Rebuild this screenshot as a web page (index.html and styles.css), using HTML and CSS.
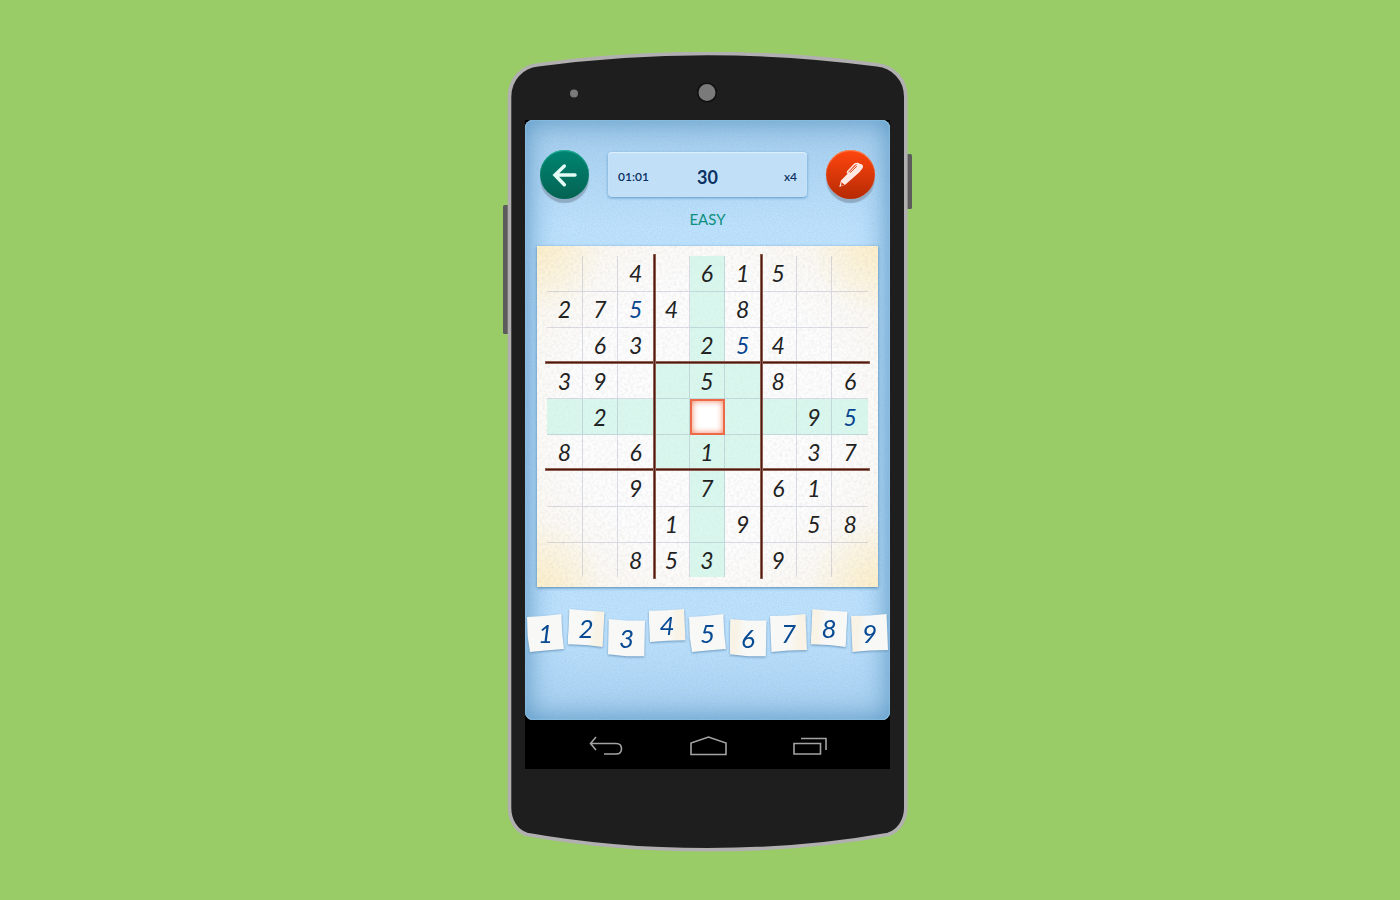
FILE: index.html
```html
<!DOCTYPE html>
<html lang="en">
<head>
<meta charset="utf-8">
<meta name="viewport" content="width=device-width, initial-scale=1">
<title>Sudoku</title>
<link rel="stylesheet" href="styles.css">
</head>
<body>
<main class="stage">
<div class="phone">
  <svg class="phone-body" viewBox="0 0 410 800" preserveAspectRatio="none" aria-hidden="true">
    <rect x="0" y="153" width="6" height="129" rx="1.5" fill="#5c5c5c"/>
    <rect x="403" y="102" width="6" height="55" rx="1.5" fill="#5c5c5c"/>
    <path d="M6.5 45C6.500 27 19 14.500 35 12.800Q204.500 -9.800 374 12.800C390 14.500 402.800 27 402.800 45V756C402.800 768 396 779 385 782.500Q300 797.800 204.500 797.800Q110 797.800 24 782.500C13 779 6.500 768 6.500 756Z" fill="#1e1e1e" stroke="#b1afaf" stroke-width="3.600"/>
    <circle cx="71" cy="41.500" r="4" fill="#7a7a7a"/>
    <circle cx="204" cy="40.500" r="9.300" fill="#7a7a7a" stroke="#101010" stroke-width="1.600"/>
  </svg>
  <div class="screen">
    <section class="app">
      <svg class="grain" aria-hidden="true">
        <filter id="grain-blue"><feTurbulence type="fractalNoise" baseFrequency="0.8" numOctaves="2" seed="4"/><feColorMatrix values="0 0 0 0 0.12  0 0 0 0 0.35  0 0 0 0 0.6  0.35 0 0 0 -0.13"/></filter>
        <rect width="100%" height="100%" filter="url(#grain-blue)"/>
      </svg>
      <header class="bar">
        <button class="round back" type="button" aria-label="Back">
          <svg viewBox="0 0 72 72" aria-hidden="true"><path d="M66 36H8M34 9L6 36L34 65" fill="none" stroke="#e3fbf5" stroke-width="10.500" stroke-linecap="round" stroke-linejoin="miter"/></svg>
        </button>
        <div class="status">
          <span class="time">01:01</span><strong class="left">30</strong><span class="count">x4</span>
        </div>
        <button class="round pen" type="button" aria-label="Pen">
          <svg viewBox="0 0 74 74" aria-hidden="true">
            <path d="M1 74L6 54L43 16L56 4Q59 0 64 2L71 5Q77 10 72 17L62 29L20 66Z" fill="#ffe9e2"/>
            <path d="M8 59L17 67L6 70Z" fill="#d63407"/>
            <path d="M29 31Q24 32 27 26L47 5Q51 1 60 2" fill="none" stroke="#ffe9e2" stroke-width="4.500" stroke-linecap="round"/>
            <path d="M34 30L55 10" fill="none" stroke="#e23c0b" stroke-width="3"/>
          </svg>
        </button>
      </header>
      <h1 class="level">EASY</h1>
      <div class="paper">
        <svg class="grain" aria-hidden="true">
          <filter id="grain-paper"><feTurbulence type="fractalNoise" baseFrequency="0.35" numOctaves="2" seed="9"/><feColorMatrix values="0 0 0 0 0.4  0 0 0 0 0.4  0 0 0 0 0.4  0.3 0 0 0 -0.11"/></filter>
          <rect width="100%" height="100%" filter="url(#grain-paper)"/>
        </svg>
        <div class="board">
          <table class="grid" aria-label="Sudoku board">
            <tbody>
            <tr><td></td><td></td><td>4</td><td></td><td class="hl">6</td><td>1</td><td>5</td><td></td><td></td></tr>
            <tr><td>2</td><td>7</td><td class="own">5</td><td>4</td><td class="hl"></td><td>8</td><td></td><td></td><td></td></tr>
            <tr><td></td><td>6</td><td>3</td><td></td><td class="hl">2</td><td class="own">5</td><td>4</td><td></td><td></td></tr>
            <tr><td>3</td><td>9</td><td></td><td class="hl"></td><td class="hl">5</td><td class="hl"></td><td>8</td><td></td><td>6</td></tr>
            <tr><td class="hl"></td><td class="hl">2</td><td class="hl"></td><td class="hl"></td><td class="selected"></td><td class="hl"></td><td class="hl"></td><td class="hl">9</td><td class="hl own">5</td></tr>
            <tr><td>8</td><td></td><td>6</td><td class="hl"></td><td class="hl">1</td><td class="hl"></td><td></td><td>3</td><td>7</td></tr>
            <tr><td></td><td></td><td>9</td><td></td><td class="hl">7</td><td></td><td>6</td><td>1</td><td></td></tr>
            <tr><td></td><td></td><td></td><td>1</td><td class="hl"></td><td>9</td><td></td><td>5</td><td>8</td></tr>
            <tr><td></td><td></td><td>8</td><td>5</td><td class="hl">3</td><td></td><td>9</td><td></td><td></td></tr>
            </tbody>
          </table>
          <i class="rule across first"></i><i class="rule across second"></i>
          <i class="rule down first"></i><i class="rule down second"></i>
        </div>
      </div>
      <div class="tiles">
        <button class="tile mid lean-left" type="button"><span>1</span></button>
        <button class="tile lean-right warm" type="button"><span>2</span></button>
        <button class="tile low flat" type="button"><span>3</span></button>
        <button class="tile short level-left warm" type="button"><span>4</span></button>
        <button class="tile mid lean-left" type="button"><span>5</span></button>
        <button class="tile low flat warm-left" type="button"><span>6</span></button>
        <button class="tile mid level-left warm" type="button"><span>7</span></button>
        <button class="tile lean-right warm-left" type="button"><span>8</span></button>
        <button class="tile mid level-left warm-left" type="button"><span>9</span></button>
      </div>
    </section>
    <nav class="keys" aria-label="System">
      <button type="button" aria-label="Back"><svg width="34" height="20" viewBox="0 0 34 20" aria-hidden="true"><path d="M7 1L1.500 7.500L7 14M2 7.500H27Q32.500 7.500 32.500 12.700Q32.500 18 27 18H15"/></svg></button>
      <button type="button" aria-label="Home"><svg width="37" height="20" viewBox="0 0 37 20" aria-hidden="true"><path d="M1 18.500V7L18.500 1L36 7V18.500Z"/></svg></button>
      <button type="button" aria-label="Recent apps"><svg width="34" height="20" viewBox="0 0 34 20" aria-hidden="true"><path d="M1 7.500H27.500V18H1ZM8 2.500H33V14"/></svg></button>
    </nav>
  </div>
</div>
</main>
</body>
</html>
```
FILE: styles.css
```css
* { box-sizing: border-box; }

body {
  margin: 0;
  background: #99cc66;
  font-family: Lato, "Open Sans", sans-serif;
}

button {
  border: 0;
  padding: 0;
  background: none;
  font: inherit;
  cursor: pointer;
}

.stage {
  min-height: 100vh;
  display: flex;
  justify-content: center;
  align-items: flex-start;
  padding: 52px 0 48px 16px;
}

.phone {
  position: relative;
  padding: 68px 23px 83px 22px;
}

.phone-body {
  position: absolute;
  inset: 0;
  width: 100%;
  height: 100%;
}

.screen {
  position: relative;
  width: 365px;
  background: #000;
}

.app {
  position: relative;
  padding: 30px 0 63px;
  border-radius: 8px;
  overflow: hidden;
  background: linear-gradient(#a6cdec, #bfe2fd 18%, #bfe2fd 85%, #a9d0f0);
  box-shadow: inset 0 0 2px #a5dbf5, inset 0 0 26px #5b97c4, inset 0 0 40px #9cc6e6;
}

.grain {
  position: absolute;
  inset: 0;
  width: 100%;
  height: 100%;
  pointer-events: none;
}

.bar {
  position: relative;
  display: flex;
  justify-content: space-between;
  align-items: center;
  padding: 0 15px;
}

.round {
  display: grid;
  place-items: center;
  width: 49px;
  height: 49px;
  border-radius: 50%;
}

.round svg { width: 24px; height: 24px; overflow: visible; }

.back {
  background: linear-gradient(#008572, #046353);
  box-shadow: inset 0 1px 1px #2bb59c, 0 4px 1px #8fabc4;
}

.pen {
  background: linear-gradient(#ff460e, #b62a04);
  box-shadow: inset 0 1px 1px #ff8a5c, 0 4px 1px #8fabc4;
}

.status {
  display: grid;
  grid-template-columns: 1fr auto 1fr;
  align-items: center;
  width: 199px;
  height: 45px;
  padding: 4px 10px 0;
  border-radius: 4px;
  background: #c1e0f8;
  box-shadow: inset 0 1px 1px #e0f1fd, 0 1px 3px #5f98c6;
  color: #0a3162;
  font-size: 12px;
  font-weight: 600;
}

.left { font-size: 18px; font-weight: 700; }
.count { text-align: right; }

.level {
  position: relative;
  margin: 9px 0 16px;
  color: #0b8f7c;
  font-size: 15px;
  font-weight: 400;
  line-height: 22px;
  text-align: center;
}

.paper {
  position: relative;
  margin: 0 12px;
  padding: 10px;
  background:
    radial-gradient(circle at 0 0, #fcefca, transparent 14%),
    radial-gradient(circle at 100% 0, #fcefca, transparent 14%),
    radial-gradient(circle at 0 100%, #fcefca, transparent 14%),
    radial-gradient(circle at 100% 100%, #fcefca, transparent 14%),
    radial-gradient(#fdfdfe 55%, #faf5ea);
  box-shadow: 0 1px 3px #4f86b3;
}

.board { position: relative; }

.grid {
  width: 100%;
  height: 321px;
  table-layout: fixed;
  border-collapse: separate;
  border-spacing: 0;
}

.grid td {
  padding: 0;
  border: solid rgba(140, 145, 175, 0.3);
  border-width: 0 1px 1px 0;
  color: #222;
  font-size: 23px;
  font-style: italic;
  font-weight: 400;
  line-height: 24px;
  text-align: center;
}

.grid td:last-child { border-right-width: 0; }
.grid tr:last-child td { border-bottom-width: 0; }
.grid .hl { background: rgba(194, 243, 226, 0.6); }
.grid .own { color: #07458f; }

.grid .selected {
  border: 2px solid #ec6a48;
  background: #fff;
  box-shadow: inset 0 0 6px #f2805f;
}

.rule {
  position: absolute;
  border: 1px solid #8f6052;
  background: #4d1a10;
}

.across { left: -2px; right: -2px; height: 3px; margin-top: -2px; }
.down { top: -2px; bottom: -2px; width: 3px; margin-left: -1px; }
.across.first { top: 33.333%; }
.across.second { top: 66.666%; }
.down.first { left: 33.333%; }
.down.second { left: 66.666%; }

.tiles {
  position: relative;
  display: flex;
  justify-content: space-between;
  align-items: flex-start;
  height: 48px;
  margin-top: 22px;
  padding: 0 2px;
}

.tile {
  width: 37px;
  height: 38px;
  color: #074a92;
  font-size: 26px;
  font-style: italic;
  line-height: 38px;
  filter: drop-shadow(0 1px 1px #6796bd);
}

.tile span { display: block; height: 100%; background: #f8f8f7; }
.mid { margin-top: 5px; }
.low { margin-top: 10px; }
.short { height: 33px; line-height: 33px; }
.warm span { background: linear-gradient(95deg, #f8f8f7 55%, #f8f3e6 75%); }
.warm-left span { background: linear-gradient(95deg, #f8f3e6 20%, #f8f8f7 40%); }
.lean-left span { clip-path: polygon(0 8%, 45% 5%, 93% 0, 95% 50%, 100% 92%, 50% 96%, 8% 100%, 2% 60%); }
.lean-right span { clip-path: polygon(5% 0, 50% 4%, 100% 7%, 97% 60%, 95% 100%, 50% 95%, 0 93%, 3% 50%); }
.flat span { clip-path: polygon(2% 0, 50% 4%, 100% 4%, 98% 98%, 50% 98%, 0 93%); }
.level-left span { clip-path: polygon(0 5%, 50% 4%, 96% 0, 100% 95%, 50% 96%, 4% 100%); }

.keys {
  display: flex;
  justify-content: space-between;
  align-items: center;
  height: 49px;
  padding: 2px 63px 0 64px;
}

.keys button { display: flex; }

.keys path {
  fill: none;
  stroke: #a3a3a3;
  stroke-width: 1.6;
}
```
